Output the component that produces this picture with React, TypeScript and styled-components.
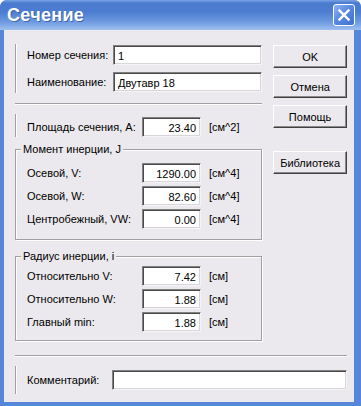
import React from "react";
import styled, { createGlobalStyle } from "styled-components";

const GlobalStyle = createGlobalStyle`
  html, body { margin: 0; padding: 0; background: #ffffff; }
  body { font-family: "Liberation Sans", Arial, sans-serif; }
  * { box-sizing: border-box; }
`;

const FACE = "#ebe9ed";

const Window = styled.div`
  width: 361px;
  height: 406px;
  display: flex;
  flex-direction: column;
  background: #5686d8;
  border-radius: 7px 7px 0 0;
  overflow: hidden;
`;

const TitleBar = styled.div`
  height: 30px;
  flex: none;
  display: flex;
  align-items: center;
  justify-content: space-between;
  padding: 0 6px 0 7px;
  background: linear-gradient(
    to bottom,
    #7aa3e6 0px,
    #4b7bcf 3px,
    #4c7dd0 12px,
    #6e9ae0 22px,
    #9fc0f0 30px
  );
`;

const Title = styled.span`
  color: #ffffff;
  font-family: "Liberation Sans", Arial, sans-serif;
  font-weight: bold;
  font-size: 18px;
  letter-spacing: 0.3px;
  text-shadow: 1px 1px 0 rgba(20, 50, 120, 0.5);
`;

const CloseButton = styled.div`
  width: 22px;
  height: 22px;
  border: 1px solid #ffffff;
  border-radius: 3px;
  background: linear-gradient(135deg, #8fb5f0 0%, #5a8ae0 45%, #3f6fcf 100%);
  display: flex;
  align-items: center;
  justify-content: center;
`;

const Client = styled.div`
  flex: 1;
  margin: 0 7px 4px 4px;
  background: ${FACE};
  padding: 14px 7px 0 11px;
  display: flex;
  flex-direction: column;
  font-size: 11px;
  color: #000;
`;

const Top = styled.div`
  display: flex;
  gap: 11px;
`;

const LeftColumn = styled.div`
  width: 248px;
  display: flex;
  flex-direction: column;
`;

const ButtonColumn = styled.div`
  width: 74px;
  display: flex;
  flex-direction: column;
  padding-top: 1px;
`;

const Button = styled.div<{ $gap?: number }>`
  height: 23px;
  margin-top: ${(p) => p.$gap ?? 0}px;
  display: flex;
  align-items: center;
  justify-content: center;
  background: ${FACE};
  border: 1px solid;
  border-color: #ffffff #404040 #404040 #ffffff;
  box-shadow: inset -1px -1px 0 #8a8a8a;
  font-size: 11px;
`;

const LinedBlock = styled.div<{ $label: number }>`
  border-left: 1px solid #a0a0a0;
  box-shadow: inset 1px 0 0 #ffffff;
  padding: 1px 0 1px 11px;
  display: grid;
  grid-template-columns: ${(p) => p.$label}px 1fr;
  row-gap: 7px;
  align-items: center;
`;

const Separator = styled.div<{ $mt: number }>`
  margin-top: ${(p) => p.$mt}px;
  height: 2px;
  border-top: 1px solid #a0a0a0;
  border-bottom: 1px solid #ffffff;
`;

const Label = styled.span`
  white-space: nowrap;
  font-size: 11px;
`;

const Input = styled.div<{ $align?: "left" | "right" }>`
  height: 20px;
  background: #ffffff;
  border: 1px solid;
  border-color: #808080 #f4f4f4 #f4f4f4 #808080;
  box-shadow: inset 1px 1px 0 #4a4a4a, inset -1px -1px 0 #d8d6da;
  display: flex;
  align-items: center;
  justify-content: ${(p) => (p.$align === "right" ? "flex-end" : "flex-start")};
  padding: 1px 4px 0 4px;
  font-size: 11px;
  white-space: nowrap;
`;

const ValueRow = styled.div`
  display: grid;
  grid-template-columns: 107px 59px auto;
  column-gap: 8px;
  align-items: center;
  height: 20px;
`;

const AreaBlock = styled.div`
  margin-top: 9px;
  border-left: 1px solid #a0a0a0;
  box-shadow: inset 1px 0 0 #ffffff;
  padding: 3px 0 0 11px;
`;

const Group = styled.fieldset<{ $mt: number; $pt: number; $pb: number }>`
  margin: ${(p) => p.$mt}px 0 0 0;
  padding: ${(p) => p.$pt}px 0 ${(p) => p.$pb}px 11px;
  border: 1px solid #a0a0a0;
  box-shadow: 1px 1px 0 #ffffff, inset 1px 1px 0 #ffffff;
  min-width: 0;
  display: flex;
  flex-direction: column;
  gap: 3px;
`;

const Legend = styled.legend`
  margin-left: -6px;
  padding: 0 2px;
  font-size: 11px;
  line-height: 13px;
  background: ${FACE};
`;

const Unit = styled.span`
  font-size: 11px;
  white-space: nowrap;
`;

const CommentBlock = styled.div`
  margin-top: 9px;
  border-left: 1px solid #a0a0a0;
  box-shadow: inset 1px 0 0 #ffffff;
  padding: 4px 0 4px 11px;
  display: grid;
  grid-template-columns: 85px 1fr;
  align-items: center;
`;

type Row = { label: string; value: string; unit: string };

const inertia: Row[] = [
  { label: "Осевой, V:", value: "1290.00", unit: "[см^4]" },
  { label: "Осевой, W:", value: "82.60", unit: "[см^4]" },
  { label: "Центробежный, VW:", value: "0.00", unit: "[см^4]" },
];

const radius: Row[] = [
  { label: "Относительно V:", value: "7.42", unit: "[см]" },
  { label: "Относительно W:", value: "1.88", unit: "[см]" },
  { label: "Главный min:", value: "1.88", unit: "[см]" },
];

const Rows = ({ rows }: { rows: Row[] }) => (
  <>
    {rows.map((r) => (
      <ValueRow key={r.label}>
        <Label>{r.label}</Label>
        <Input $align="right">{r.value}</Input>
        <Unit>{r.unit}</Unit>
      </ValueRow>
    ))}
  </>
);

export default function App() {
  return (
    <>
      <GlobalStyle />
      <Window>
        <TitleBar>
          <Title>Сечение</Title>
          <CloseButton>
            <svg width="14" height="14" viewBox="0 0 14 14">
              <path
                d="M2.5 2.5 L11.5 11.5 M11.5 2.5 L2.5 11.5"
                stroke="#ffffff"
                strokeWidth="2.4"
                strokeLinecap="square"
              />
            </svg>
          </CloseButton>
        </TitleBar>
        <Client>
          <Top>
            <LeftColumn>
              <LinedBlock $label={86}>
                <Label>Номер сечения:</Label>
                <Input>1</Input>
                <Label>Наименование:</Label>
                <Input>Двутавр 18</Input>
              </LinedBlock>
              <Separator $mt={10} />
              <AreaBlock>
                <ValueRow>
                  <Label>Площадь сечения, А:</Label>
                  <Input $align="right">23.40</Input>
                  <Unit>[см^2]</Unit>
                </ValueRow>
              </AreaBlock>
              <Group $mt={6} $pt={7} $pb={10}>
                <Legend>Момент инерции, J</Legend>
                <Rows rows={inertia} />
              </Group>
              <Group $mt={10} $pt={3} $pb={8}>
                <Legend>Радиус инерции, i</Legend>
                <Rows rows={radius} />
              </Group>
            </LeftColumn>
            <ButtonColumn>
              <Button>OK</Button>
              <Button $gap={7}>Отмена</Button>
              <Button $gap={7}>Помощь</Button>
              <Button $gap={23}>Библиотека</Button>
            </ButtonColumn>
          </Top>
          <Separator $mt={14} />
          <CommentBlock>
            <Label>Комментарий:</Label>
            <Input />
          </CommentBlock>
        </Client>
      </Window>
    </>
  );
}
